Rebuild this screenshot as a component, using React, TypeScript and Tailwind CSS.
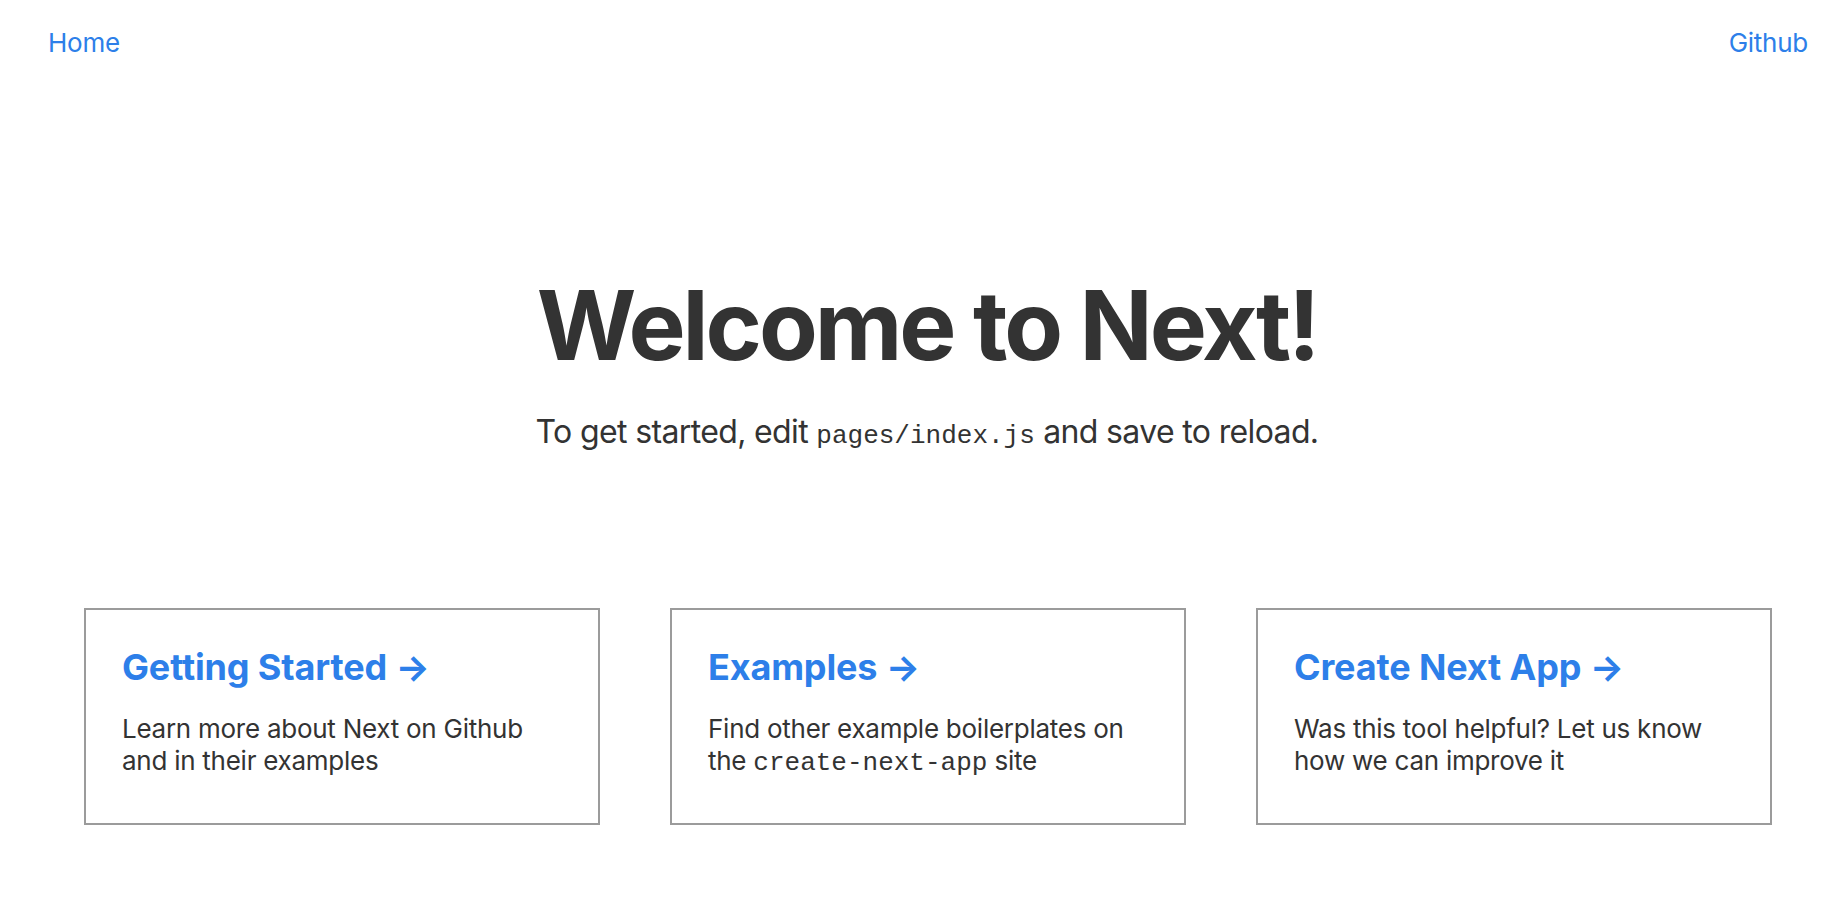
import React from "react";

const cards = [
  {
    title: "Getting Started",
    body: <>Learn more about Next on Github and in their examples</>,
  },
  {
    title: "Examples",
    body: (
      <>
        Find other example boilerplates on the{" "}
        <code className="font-['Liberation_Mono',monospace] text-[26px] leading-none tracking-normal">
          create-next-app
        </code>{" "}
        site
      </>
    ),
  },
  {
    title: "Create Next App",
    body: <>Was this tool helpful? Let us know how we can improve it</>,
  },
];

export default function App() {
  return (
    <div className="min-h-screen bg-white pl-[22px] font-['Inter',sans-serif] text-[#333]">
      <nav className="flex justify-between pl-[26px] pr-[24px] pt-[27px] text-[26px] leading-[32px] tracking-[-0.01em] text-[#2d7fe9]">
        <a href="#">Home</a>
        <a href="#">Github</a>
      </nav>
      <h1 className="mt-[211px] text-center text-[96px] font-bold leading-[1.15] tracking-[-0.032em]">
        Welcome to Next!
      </h1>
      <p className="mt-[32px] h-[39px] text-center text-[32px] leading-[39px] tracking-[-0.02em]">
        To get started, edit{" "}
        <code className="font-['Liberation_Mono',monospace] text-[26px] leading-none tracking-normal">
          pages/index.js
        </code>{" "}
        and save to reload.
      </p>
      <div className="ml-[62px] mt-[157px] flex w-[1688px] justify-between">
        {cards.map((c) => (
          <a
            key={c.title}
            href="#"
            className="block w-[516px] border-2 border-[#9b9b9b] px-[36px] pb-[47px] pt-[35px]"
          >
            <h3 className="text-[36px] font-bold leading-[44px] tracking-[-0.004em] text-[#2d7fe9]">
              {c.title} →
            </h3>
            <p className="pt-[24px] text-[26px] leading-[31.5px] tracking-[-0.01em] text-[#333]">
              {c.body}
            </p>
          </a>
        ))}
      </div>
    </div>
  );
}
